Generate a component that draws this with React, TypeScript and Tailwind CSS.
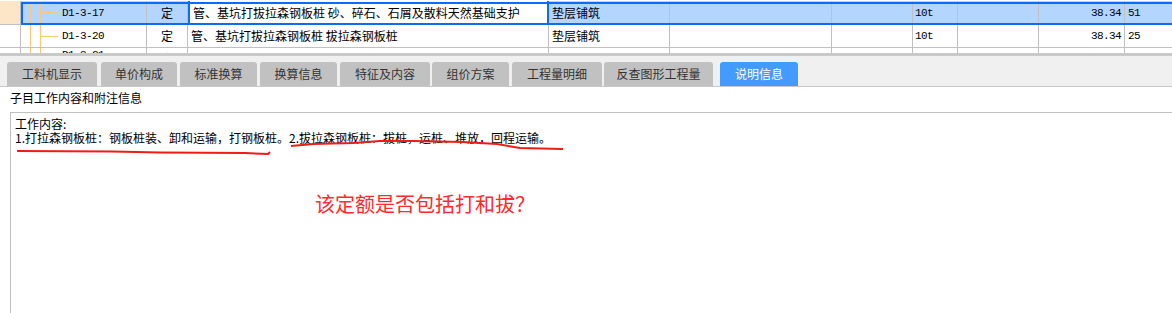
import React from "react";

const cjk = "font-['Noto_Sans_CJK_SC','Noto_Sans',sans-serif]";
const mono = "font-['Liberation_Mono','Noto_Sans_CJK_SC',monospace] text-[11px] tracking-[-0.6px]";

interface RowData
{
    code: string;
    kind: string;
    desc: string;
    work: string;
    unit: string;
    price: string;
    extra: string;
    branch: boolean;
}

const rows: RowData[] = [
    { code: "D1-3-17", kind: "定", desc: "管、基坑打拔拉森钢板桩 砂、碎石、石屑及散料天然基础支护", work: "垫层铺筑", unit: "10t", price: "38.34", extra: "51", branch: true },
    { code: "D1-3-20", kind: "定", desc: "管、基坑打拔拉森钢板桩 拔拉森钢板桩", work: "垫层铺筑", unit: "10t", price: "38.34", extra: "25", branch: true },
    { code: "D1-3-21", kind: "定", desc: "管、基坑打拔拉森钢板桩 打拉森钢板桩安装", work: "垫层铺筑", unit: "10t", price: "38.34", extra: "12", branch: false },
];

const tabs = [
    { label: "工料机显示", w: "w-[90px]", ml: "ml-0" },
    { label: "单价构成", w: "w-[76px]", ml: "ml-[4px]" },
    { label: "标准换算", w: "w-[77px]", ml: "ml-[3px]" },
    { label: "换算信息", w: "w-[77px]", ml: "ml-[3px]" },
    { label: "特征及内容", w: "w-[90px]", ml: "ml-[3px]" },
    { label: "组价方案", w: "w-[77px]", ml: "ml-[2px]" },
    { label: "工程量明细", w: "w-[90px]", ml: "ml-[3px]" },
    { label: "反查图形工程量", w: "w-[109px]", ml: "ml-[2px]" },
    { label: "说明信息", w: "w-[78px]", ml: "ml-[7px]" },
];

function TreeCell({ row, align }: { row: RowData; align: string })
{
    return (
        <div className={`flex w-[126px] shrink-0 border-r border-[#c0c0c0] pl-[9px] ${align}`}>
            <span className="w-px self-stretch bg-[#fbc878]" />
            <span className="ml-[9px] w-px self-stretch bg-[#fbc878]" />
            <span className={row.branch ? "h-px w-[17px] self-center bg-[#fbc878]" : "w-[17px]"} />
            <span className={`ml-[4px] leading-[14px] text-black ${mono}`}>{row.code}</span>
        </div>
    );
}

function TableRow({ row, selected, last }: { row: RowData; selected: boolean; last?: boolean })
{
    const align = last ? "items-start pt-[4px]" : "items-center";
    return (
        <div className={`flex ${last ? "h-[23px]" : selected ? "h-[24px] border-b border-[#c0c0c0]" : "h-[23px] border-b border-[#c0c0c0]"}`}>
            <div className={`w-[21px] shrink-0 border-r border-[#c0c0c0] ${selected ? "bg-[#fde6c8]" : "bg-white"}`} />
            <div className={`relative flex flex-1 ${selected ? "bg-[#b4d5fe]" : "bg-white"}`}>
                <TreeCell row={row} align={last ? "items-start" : "items-center"} />
                <div className={`flex w-[41px] shrink-0 justify-center border-r border-[#c0c0c0] text-[12px] leading-[14px] ${cjk} ${align}`}>{row.kind}</div>
                <div className={`flex w-[361px] shrink-0 overflow-hidden whitespace-nowrap pl-[3px] text-[12px] leading-[14px] ${cjk} ${align} ${selected ? "border-x-2 border-[#0d6cf6] bg-white" : "border-r border-[#c0c0c0]"}`}>{row.desc}</div>
                <div className={`flex w-[121px] shrink-0 border-r border-[#c0c0c0] pl-[3px] text-[12px] leading-[14px] ${cjk} ${align}`}>{row.work}</div>
                <div className="w-[162px] shrink-0 border-r border-[#c0c0c0]" />
                <div className="w-[81px] shrink-0 border-r border-[#c0c0c0]" />
                <div className={`flex w-[45px] shrink-0 border-r border-[#c0c0c0] pl-[2px] leading-[14px] ${mono} ${align}`}>{row.unit}</div>
                <div className="w-[81px] shrink-0 border-r border-[#c0c0c0]" />
                <div className={`flex w-[86px] shrink-0 justify-end border-r border-[#c0c0c0] pr-[3px] leading-[14px] ${mono} ${align}`}>{row.price}</div>
                <div className={`flex w-[60px] shrink-0 pl-[3px] leading-[14px] ${mono} ${align}`}>{row.extra}</div>
                {selected && (
                    <div className="pointer-events-none absolute left-0 right-[-10px] top-[1px] bottom-[-1px] border-2 border-[#0d6cf6]" />
                )}
            </div>
        </div>
    );
}

export default function App()
{
    return (
        <div className={`relative h-[313px] w-[1172px] overflow-hidden bg-white text-black ${cjk}`}>
            <div className="h-[53px] overflow-hidden pt-[1px]">
                <TableRow row={rows[0]} selected={true} />
                <TableRow row={rows[1]} selected={false} />
                <TableRow row={rows[2]} selected={false} last />
            </div>
            <div className="h-[3px] bg-[#c9c9c9]" />
            <div className="flex h-[31px] items-end border-b border-[#c8c8c8] bg-[#f0f0f0] pl-[7px]">
                {tabs.map((t, i) => (
                    <div key={i}
                        className={`flex h-[24px] shrink-0 items-center justify-center rounded-t-[3px] text-[12px] ${t.w} ${t.ml} ${i === tabs.length - 1 ? "bg-[#449bff] text-white" : "bg-[#c1c1c1] text-[#333333]"}`}>
                        {t.label}
                    </div>
                ))}
            </div>
            <div className="pl-[10px]">
                <div className="h-[25px] pt-[4px] text-[12px] leading-[14px]">子目工作内容和附注信息</div>
                <div className="h-[300px] border-l border-t border-[#c0c0c0] pl-[4px] pt-[4px]">
                    <div className="text-[12px] leading-[14px]">工作内容:</div>
                    <div className="whitespace-nowrap text-[12px] leading-[14px]">
                        1.打拉森钢板桩：钢板桩装、卸和运输，打钢板桩。2.拔拉森钢板桩：拔桩，运桩、堆放，回程运输。
                    </div>
                    <div className="mt-[49px] pl-[300px] text-[20px] leading-[20px] text-[#ff2a2a]">该定额是否包括打和拔？</div>
                </div>
            </div>
            <svg className="pointer-events-none absolute left-0 top-0" width="1172" height="313" viewBox="0 0 1172 313">
                <polyline points="17,151 112,151.5 160,152.5 245,153 268,154 270,152" fill="none" stroke="#f21b14" strokeWidth="2" />
                <polyline points="291,146 313,144 353,143 380,141 413,141 463,142 497,144 520,148 563,149" fill="none" stroke="#f21b14" strokeWidth="2" />
            </svg>
        </div>
    );
}
